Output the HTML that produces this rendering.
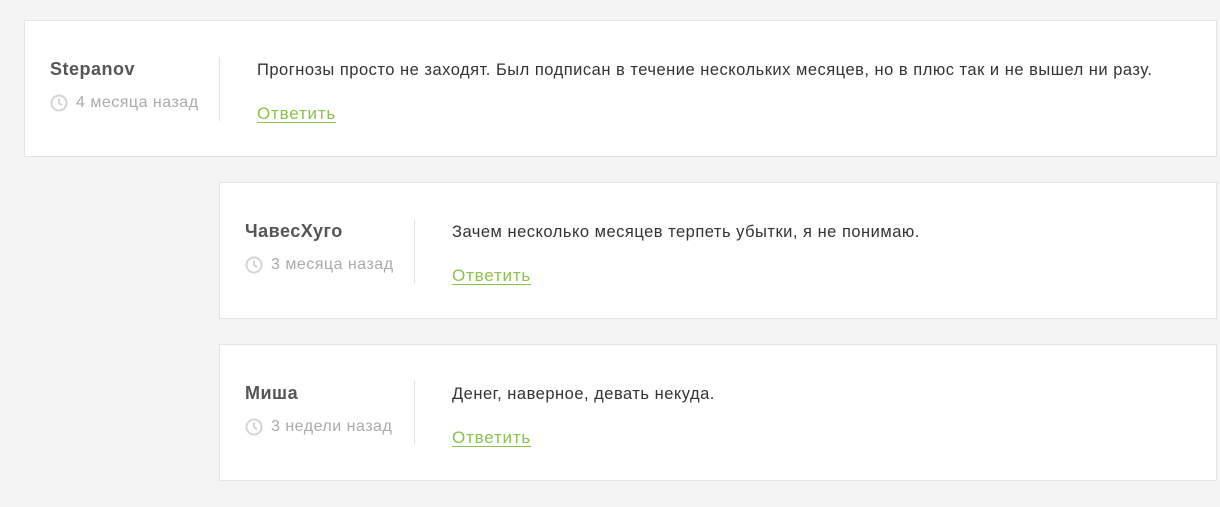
<!DOCTYPE html>
<html><head><meta charset="utf-8"><style>
body{margin:0;background:#f4f4f4;width:1220px;height:507px;overflow:hidden;font-family:"Liberation Sans",sans-serif;position:relative}
.c{position:absolute;background:#fff;border:1px solid #e4e4e4;box-sizing:border-box;height:137px;right:3px}
.n{position:absolute;left:25px;top:38px;font-size:18px;font-weight:bold;color:#555;letter-spacing:0.5px}
.t{position:absolute;left:25px;top:73px;font-size:16px;color:#aaa;display:flex;align-items:center;letter-spacing:0.5px}
.t svg{margin-right:8px}
.d{position:absolute;left:194px;top:36px;width:1px;height:64px;background:#e2e2e2}
.x{position:absolute;left:232px;top:40px;font-size:16.5px;color:#333;white-space:nowrap;letter-spacing:0.5px}
.r{position:absolute;left:232px;top:83px;font-size:17px;color:#8bc34a;text-decoration:underline;text-underline-offset:3px;letter-spacing:0.8px}
</style></head><body>
<div class="c" style="left:24px;top:20px">
<div class="n">Stepanov</div>
<div class="t"><svg width="18" height="18" viewBox="0 0 18 18"><circle cx="9" cy="9" r="7.5" fill="none" stroke="#d5d5d5" stroke-width="2"/><path d="M9 4.5V9l3 2.5" fill="none" stroke="#d5d5d5" stroke-width="2"/></svg>4 месяца назад</div>
<div class="d"></div>
<div class="x">Прогнозы просто не заходят. Был подписан в течение нескольких месяцев, но в плюс так и не вышел ни разу.</div>
<div class="r">Ответить</div>
</div>
<div class="c" style="left:219px;top:182px">
<div class="n">ЧавесХуго</div>
<div class="t"><svg width="18" height="18" viewBox="0 0 18 18"><circle cx="9" cy="9" r="7.5" fill="none" stroke="#d5d5d5" stroke-width="2"/><path d="M9 4.5V9l3 2.5" fill="none" stroke="#d5d5d5" stroke-width="2"/></svg>3 месяца назад</div>
<div class="d"></div>
<div class="x">Зачем несколько месяцев терпеть убытки, я не понимаю.</div>
<div class="r">Ответить</div>
</div>
<div class="c" style="left:219px;top:344px">
<div class="n">Миша</div>
<div class="t"><svg width="18" height="18" viewBox="0 0 18 18"><circle cx="9" cy="9" r="7.5" fill="none" stroke="#d5d5d5" stroke-width="2"/><path d="M9 4.5V9l3 2.5" fill="none" stroke="#d5d5d5" stroke-width="2"/></svg>3 недели назад</div>
<div class="d"></div>
<div class="x">Денег, наверное, девать некуда.</div>
<div class="r">Ответить</div>
</div>
</body></html>
